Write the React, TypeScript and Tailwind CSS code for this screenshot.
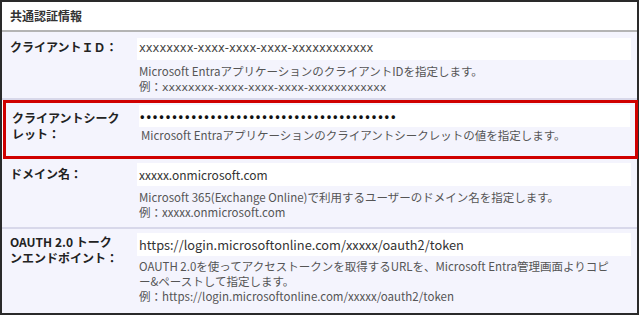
import React from "react";

const jp = { fontFamily: '"Noto Sans CJK JP", "Noto Sans", sans-serif' };

function Help({ children, mt = "mt-[5px]" }: { children: React.ReactNode; mt?: string }) {
  return (
    <div className={`text-[11.5px] text-[#555] pl-[2px] leading-[15px] whitespace-nowrap ${mt}`} style={jp}>
      {children}
    </div>
  );
}

export default function App() {
  const dots = "•".repeat(40);
  return (
    <div className="w-[640px] h-[317px] bg-white" style={jp}>
      <div className="w-[639px] h-[315px] border-2 border-[#2a2a2a] flex flex-col">
        {/* header */}
        <div className="h-[30px] bg-white border-b-2 border-[#b4b4b4] flex items-center pl-[8px]">
          <span className="text-[12px] font-bold text-[#333]">共通認証情報</span>
        </div>

        {/* row 1 */}
        <div className="h-[68px] bg-[#f4f4fd] border-b-2 border-[#d8d8ea] flex pt-[6px] pr-[6px]">
          <div className="w-[135px] pl-[8px] pt-[1px] text-[12px] leading-[15px] font-bold text-[#222]">クライアントＩＤ：</div>
          <div className="flex-1">
            <div className="h-[22px] bg-white flex items-center pl-[2px] text-[#444]" style={{ fontFamily: '"DejaVu Sans", sans-serif', fontSize: "11.5px" }}>
              xxxxxxxx-xxxx-xxxx-xxxx-xxxxxxxxxxxx
            </div>
            <Help mt="mt-[4px]">
              Microsoft Entraアプリケーションのクライアント​IDを指定します。
              <br />
              例：<span style={{ fontFamily: '"DejaVu Sans", sans-serif', fontSize: "11px" }}>xxxxxxxx-xxxx-xxxx-xxxx-xxxxxxxxxxxx</span>
            </Help>
          </div>
        </div>

        {/* row 2 (highlighted) */}
        <div className="h-[59px] bg-[#f4f4fd] border-[3px] border-[#d00000] ml-[1px] -mr-[1px] flex pt-[2px] pr-[5px]">
          <div className="w-[133px] pl-[6px] pt-[5px] text-[12px] leading-[16px] font-bold text-[#222]">
            クライアントシーク
            <br />
            レット：
          </div>
          <div className="flex-1">
            <div className="h-[22px] bg-white flex items-center pl-[1px] text-[12px] font-bold text-[#111] tracking-[1.9px]">
              {dots}
            </div>
            <Help mt="mt-[1px]">Microsoft Entraアプリケーションのクライアントシークレットの値を指定します。</Help>
          </div>
        </div>

        {/* row 3 */}
        <div className="h-[70px] bg-[#f4f4fd] border-b-2 border-[#d8d8ea] flex pt-[4px] pr-[6px]">
          <div className="w-[135px] pl-[8px] pt-[3px] text-[12px] leading-[15px] font-bold text-[#222]">ドメイン名：</div>
          <div className="flex-1">
            <div className="h-[23px] bg-white flex items-center pl-[2px] text-[12px] text-[#333]">xxxxx.onmicrosoft.com</div>
            <Help mt="mt-[4px]">
              Microsoft 365(Exchange Online)で利用するユーザーのドメイン名を指定します。
              <br />
              例：xxxxx.onmicrosoft.com
            </Help>
          </div>
        </div>

        {/* row 4 */}
        <div className="flex-1 bg-[#f4f4fd] flex pt-[4px] pr-[6px]">
          <div className="w-[135px] pl-[8px] pt-[1px] text-[12px] leading-[16px] font-bold text-[#222]">
            OAUTH 2.0 トーク
            <br />
            ンエンドポイント：
          </div>
          <div className="flex-1">
            <div className="h-[23px] bg-white flex items-center pl-[2px] text-[12.8px] text-[#333]">
              https://login.microsoftonline.com/xxxxx/oauth2/token
            </div>
            <Help mt="mt-[3px]">
              OAUTH 2.0を使ってアクセストークンを取得するURLを、Microsoft Entra管理画面よりコピ
              <br />
              ー&amp;ペーストして指定します。
              <br />
              例：https://login.microsoftonline.com/xxxxx/oauth2/token
            </Help>
          </div>
        </div>
      </div>
    </div>
  );
}
